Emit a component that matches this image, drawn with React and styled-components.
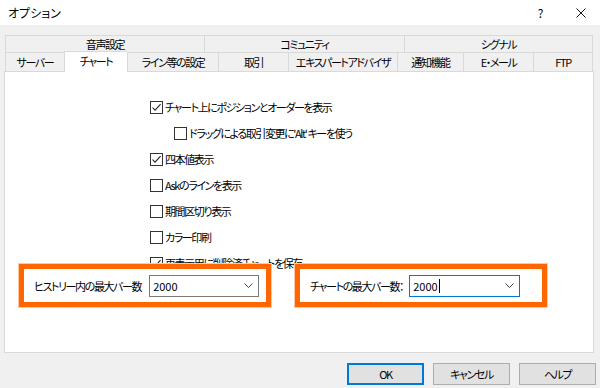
import React from "react"
import styled, { createGlobalStyle } from "styled-components"

const GlobalStyle = createGlobalStyle`
  html, body {
    margin: 0;
    padding: 0;
    background: #f0f0f0;
  }
  body {
    font-family: "Noto Sans CJK JP", "Noto Sans", sans-serif;
  }
`

const topTabs = [
  { label: "音声設定", width: 199 },
  { label: "コミュニティ", width: 200 },
  { label: "シグナル", width: 189 },
]

const bottomTabs = [
  { label: "サーバー", width: 59 },
  { label: "チャート", width: 63, active: true },
  { label: "ライン等の設定", width: 91 },
  { label: "取引", width: 70 },
  { label: "エキスパートアドバイザ", width: 109 },
  { label: "通知機能", width: 66 },
  { label: "E・メール", width: 70 },
  { label: "FTP", width: 60 },
]

const options = [
  { label: "チャート上にポジションとオーダーを表示", checked: true },
  { label: "ドラッグによる取引変更に'Alt' キーを使う", indent: true },
  { label: "四本値表示", checked: true },
  { label: "Askのラインを表示" },
  { label: "期間区切り表示" },
  { label: "カラー印刷" },
  { label: "再表示用に削除済チャートを保存", checked: true },
]

const CheckBox = ({ checked }) => (
  <Box>
    {checked && (
      <svg width="11" height="11" viewBox="0 0 11 11">
        <path d="M1.5 5.5 L4 8.2 L9.6 2.2" fill="none" stroke="#222" strokeWidth="1.1" />
      </svg>
    )}
  </Box>
)

const Chevron = () => (
  <svg width="9" height="5" viewBox="0 0 9 5">
    <path d="M0.5 0.5 L4.5 4.5 L8.5 0.5" fill="none" stroke="#444" strokeWidth="1" />
  </svg>
)

const ComboField = ({ label, width, gap, focused }) => (
  <Highlight>
    <FieldLabel gap={gap}>{label}</FieldLabel>
    <Combo width={width} focused={focused}>
      <ComboText>
        2000
        {focused && <Caret />}
      </ComboText>
      <Chevron />
    </Combo>
  </Highlight>
)

const App = () => {
  return (
    <>
      <GlobalStyle />
      <Dialog>
        <TitleBar>
          <Title>オプション</Title>
          <CaptionButton w={42}>?</CaptionButton>
          <CaptionButton w={39}>
            <svg width="10" height="10" viewBox="0 0 10 10">
              <path d="M0.5 0.5 L9.5 9.5 M9.5 0.5 L0.5 9.5" stroke="#111" strokeWidth="1" />
            </svg>
          </CaptionButton>
        </TitleBar>

        <Body>
          <TabStrip>
            <TabRow>
              {topTabs.map(t => (
                <Tab key={t.label} width={t.width}>
                  {t.label}
                </Tab>
              ))}
            </TabRow>
            <TabRow tall>
              {bottomTabs.map(t => (
                <Tab key={t.label} width={t.width} active={t.active}>
                  {t.label}
                </Tab>
              ))}
            </TabRow>
          </TabStrip>

          <Panel>
            <CheckList>
              {options.map(o => (
                <CheckRow key={o.label} indent={o.indent}>
                  <CheckBox checked={o.checked} />
                  <CheckLabel>{o.label}</CheckLabel>
                </CheckRow>
              ))}
            </CheckList>
            <FieldRow>
              <ComboField label="ヒストリー内の最大バー数" width={110} gap={8} />
              <ComboField label="チャートの最大バー数：" width={111} gap={6} focused />
            </FieldRow>
          </Panel>

          <Footer>
            <Button primary>OK</Button>
            <Button>キャンセル</Button>
            <Button>ヘルプ</Button>
          </Footer>
        </Body>
      </Dialog>
    </>
  )
}

const Dialog = styled.div`
  width: 600px;
  height: 388px;
  background: #f0f0f0;
  display: flex;
  flex-direction: column;
  overflow: hidden;
  font-size: 11px;
  letter-spacing: -1.4px;
  color: #000;
  font-feature-settings: "palt" 1;
`

const TitleBar = styled.div`
  height: 25px;
  background: #fff;
  display: flex;
  align-items: center;
`

const Title = styled.div`
  flex: 1;
  padding-left: 8px;
  font-size: 12px;
  letter-spacing: 0;
`

const CaptionButton = styled.div`
  width: ${p => p.w}px;
  height: 25px;
  display: flex;
  align-items: center;
  justify-content: center;
  font-size: 12px;
`

const Body = styled.div`
  display: flex;
  flex-direction: column;
  padding: 10px 6px 0 4px;
`

const TabStrip = styled.div`
  margin-left: 1px;
  display: flex;
  flex-direction: column;
`

const TabRow = styled.div`
  display: flex;
  height: ${p => (p.tall ? 19 : 17)}px;
`

const Tab = styled.div`
  box-sizing: border-box;
  width: ${p => p.width}px;
  display: flex;
  align-items: center;
  justify-content: center;
  border-top: 1px solid #d9d9d9;
  border-left: 1px solid #d9d9d9;
  background: ${p => (p.active ? "#fff" : "#f0f0f0")};
  position: ${p => (p.active ? "relative" : "static")};
  z-index: ${p => (p.active ? 1 : "auto")};
  margin: ${p => (p.active ? "-1px 0 -1px 0" : "0")};
  height: ${p => (p.active ? "calc(100% + 2px)" : "100%")};
  padding-bottom: ${p => (p.active ? "2px" : "0")};
  white-space: nowrap;

  &:last-child {
    border-right: 1px solid #d9d9d9;
  }
`

const Panel = styled.div`
  box-sizing: border-box;
  height: 282px;
  background: #fff;
  border: 1px solid #d9d9d9;
  display: flex;
  flex-direction: column;
`

const CheckList = styled.div`
  display: flex;
  flex-direction: column;
  gap: 13px;
  padding: 29px 0 0 145px;
`

const CheckRow = styled.div`
  display: flex;
  align-items: center;
  height: 13px;
  margin-left: ${p => (p.indent ? 24 : 0)}px;
`

const Box = styled.div`
  box-sizing: border-box;
  width: 13px;
  height: 13px;
  border: 1px solid #333;
  background: #fff;
  display: flex;
  align-items: center;
  justify-content: center;
  flex: none;
`

const CheckLabel = styled.span`
  margin-left: 2px;
  white-space: nowrap;
  line-height: 13px;
`

const FieldRow = styled.div`
  position: relative;
  display: flex;
  gap: 24px;
  margin-top: -6px;
  padding-left: 14px;
`

const Highlight = styled.div`
  box-sizing: border-box;
  width: 252px;
  height: 43px;
  border: 5px solid #ff6600;
  box-shadow: 0 0 0 1px #ffc7a3;
  background: #fff;
  display: flex;
  align-items: center;
  padding-left: 10px;
`

const FieldLabel = styled.span`
  margin-right: ${p => p.gap}px;
  white-space: nowrap;
`

const Combo = styled.div`
  box-sizing: border-box;
  width: ${p => p.width}px;
  height: 22px;
  border: 1px solid ${p => (p.focused ? "#0078d7" : "#7a7a7a")};
  background: #fff;
  display: flex;
  align-items: center;
  justify-content: space-between;
  padding: 0 5px 0 3px;
`

const ComboText = styled.span`
  display: flex;
  align-items: center;
  letter-spacing: 0;
`

const Caret = styled.span`
  display: inline-block;
  width: 1px;
  height: 14px;
  background: #000;
  margin-left: 1px;
`

const Footer = styled.div`
  display: flex;
  justify-content: flex-end;
  gap: 9px;
  padding-top: 10px;
  margin-right: -2px;
`

const Button = styled.div`
  box-sizing: border-box;
  width: 77px;
  height: 22px;
  background: #e1e1e1;
  border: ${p => (p.primary ? "2px solid #0078d7" : "1px solid #adadad")};
  display: flex;
  align-items: center;
  justify-content: center;
`

export default App
